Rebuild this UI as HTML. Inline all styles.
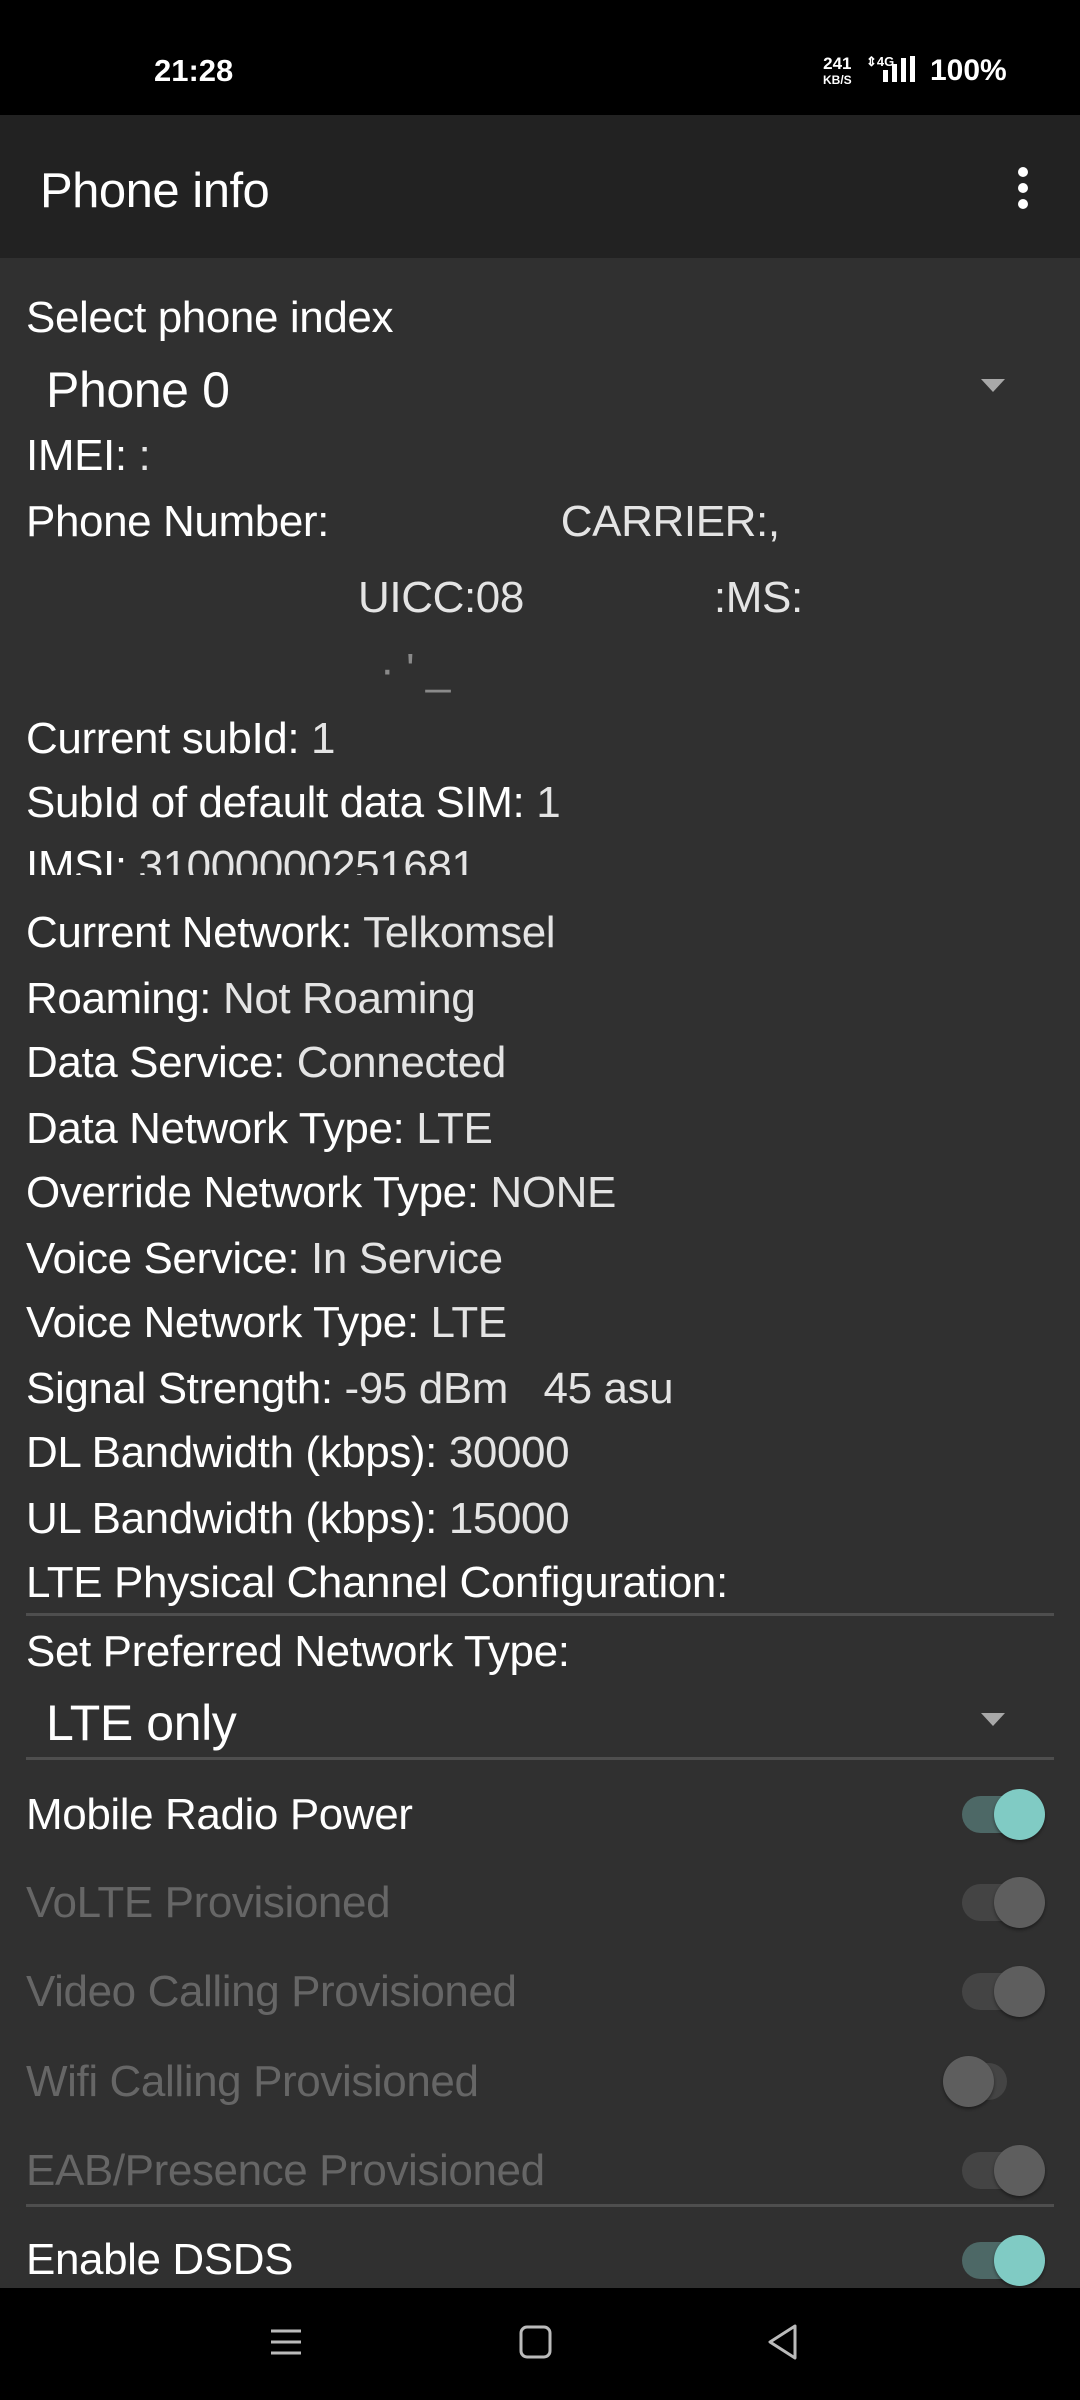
<!DOCTYPE html>
<html><head><meta charset="utf-8"><style>
*{margin:0;padding:0;box-sizing:border-box}
body{width:1080px;height:2400px;background:#303030;position:relative;overflow:hidden;font-family:"Liberation Sans",sans-serif;color:#fff}
.sb{position:absolute;left:0;top:0;width:1080px;height:115px;background:#000}
.tb{position:absolute;left:0;top:115px;width:1080px;height:143px;background:#222}
.nav{position:absolute;left:0;top:2288px;width:1080px;height:112px;background:#000}
.r{position:absolute;left:26px;height:64px;line-height:64px;font-size:44px;letter-spacing:-0.4px;white-space:nowrap;color:#fff}
.v{color:#e4e4e4}
.dis{color:#666}
.div{position:absolute;left:26px;width:1028px;height:3px;background:#4e4e4e}
.arr{position:absolute;left:981px;width:0;height:0;border-left:12px solid transparent;border-right:12px solid transparent;border-top:13px solid #a8a8a8}
.sw{position:absolute;left:962px;width:64px;height:37px;border-radius:19px}
.th{position:absolute;width:51px;height:51px;border-radius:50%;top:-7px;box-shadow:0 2px 3px rgba(0,0,0,.4)}
</style></head><body>
<div class="sb">
<div style="position:absolute;left:154px;top:50px;font:bold 31px 'Liberation Sans',sans-serif;line-height:42px">21:28</div>
<div style="position:absolute;left:823px;top:56px;font:bold 17px 'Liberation Sans',sans-serif;line-height:15px;text-align:center">241<br><span style="font-size:12px">KB/S</span></div>
<div style="position:absolute;left:866px;top:54px;font:bold 13px 'Liberation Sans',sans-serif">⇕4G</div>
<div style="position:absolute;left:883px;top:70px;width:5px;height:12px;background:#fff"></div>
<div style="position:absolute;left:892px;top:64px;width:5px;height:18px;background:#fff"></div>
<div style="position:absolute;left:901px;top:58px;width:5px;height:24px;background:#fff"></div>
<div style="position:absolute;left:910px;top:56px;width:5px;height:26px;background:#fff"></div>
<div style="position:absolute;left:930px;top:52px;font:bold 30px 'Liberation Sans',sans-serif;line-height:38px">100%</div>
</div>
<div class="tb">
<div style="position:absolute;left:40px;top:46px;font-size:49px;line-height:60px;letter-spacing:-0.5px">Phone info</div>
<div style="position:absolute;left:1018px;top:52px;width:10px;height:10px;border-radius:50%;background:#fff;box-shadow:0 16px 0 #fff,0 32px 0 #fff"></div>
</div>

<div class="r" style="top:286px">Select phone index</div>
<div class="r" style="top:356px;left:46px;font-size:50px;line-height:68px">Phone 0</div>
<div class="arr" style="top:379px"></div>
<div class="r" style="top:424px">IMEI: <span class="v">:</span></div>
<div class="r" style="top:490px">Phone Number: <span class="v" style="margin-left:220px">CARRIER:,</span></div>
<div class="r v" style="top:566px;left:358px">UICC:08<span style="margin-left:190px">:MS:</span></div>
<div class="r v" style="top:638px;left:380px;opacity:.5">·  '            _</div>
<div class="r" style="top:707px">Current subId: <span class="v">1</span></div>
<div class="r" style="top:771px">SubId of default data SIM: <span class="v">1</span></div>
<div class="r" style="top:835px;height:40px;overflow:hidden">IMSI: <span class="v">31000000251681</span></div>
<div class="r" style="top:901px">Current Network: <span class="v">Telkomsel</span></div>
<div class="r" style="top:967px">Roaming: <span class="v">Not Roaming</span></div>
<div class="r" style="top:1031px">Data Service: <span class="v">Connected</span></div>
<div class="r" style="top:1097px">Data Network Type: <span class="v">LTE</span></div>
<div class="r" style="top:1161px">Override Network Type: <span class="v">NONE</span></div>
<div class="r" style="top:1227px">Voice Service: <span class="v">In Service</span></div>
<div class="r" style="top:1291px">Voice Network Type: <span class="v">LTE</span></div>
<div class="r" style="top:1357px">Signal Strength: <span class="v">-95 dBm&nbsp;&nbsp;&nbsp;45 asu</span></div>
<div class="r" style="top:1421px">DL Bandwidth (kbps): <span class="v">30000</span></div>
<div class="r" style="top:1487px">UL Bandwidth (kbps): <span class="v">15000</span></div>
<div class="r" style="top:1551px">LTE Physical Channel Configuration:</div>
<div class="div" style="top:1613px"></div>
<div class="r" style="top:1620px">Set Preferred Network Type:</div>
<div class="r" style="top:1689px;left:46px;font-size:50px;line-height:68px">LTE only</div>
<div class="arr" style="top:1713px"></div>
<div class="div" style="top:1757px"></div>

<div class="r" style="top:1783px">Mobile Radio Power</div>
<div class="sw" style="top:1796px;background:#4d6866"><div class="th" style="left:32px;background:#80cbc4"></div></div>
<div class="r dis" style="top:1871px">VoLTE Provisioned</div>
<div class="sw" style="top:1884px;background:#444"><div class="th" style="left:32px;background:#5e5e5e"></div></div>
<div class="r dis" style="top:1960px">Video Calling Provisioned</div>
<div class="sw" style="top:1973px;background:#444"><div class="th" style="left:32px;background:#5e5e5e"></div></div>
<div class="r dis" style="top:2050px">Wifi Calling Provisioned</div>
<div class="sw" style="top:2063px;left:943px;background:#444"><div class="th" style="left:0;background:#5e5e5e"></div></div>
<div class="r dis" style="top:2139px">EAB/Presence Provisioned</div>
<div class="sw" style="top:2152px;background:#444"><div class="th" style="left:32px;background:#5e5e5e"></div></div>
<div class="div" style="top:2204px"></div>
<div class="r" style="top:2228px">Enable DSDS</div>
<div class="sw" style="top:2242px;background:#4d6866"><div class="th" style="left:32px;background:#80cbc4"></div></div>

<div class="nav">
<svg width="1080" height="112" style="position:absolute;left:0;top:0">
<g stroke="#bbb" stroke-width="3" fill="none">
<line x1="271" y1="43" x2="301" y2="43"/><line x1="271" y1="54" x2="301" y2="54"/><line x1="271" y1="65" x2="301" y2="65"/>
<rect x="521" y="39" width="29" height="30" rx="6"/>
<path d="M795 38 L770 54 L795 70 Z" stroke-linejoin="round"/>
</g></svg>
</div>
</body></html>
